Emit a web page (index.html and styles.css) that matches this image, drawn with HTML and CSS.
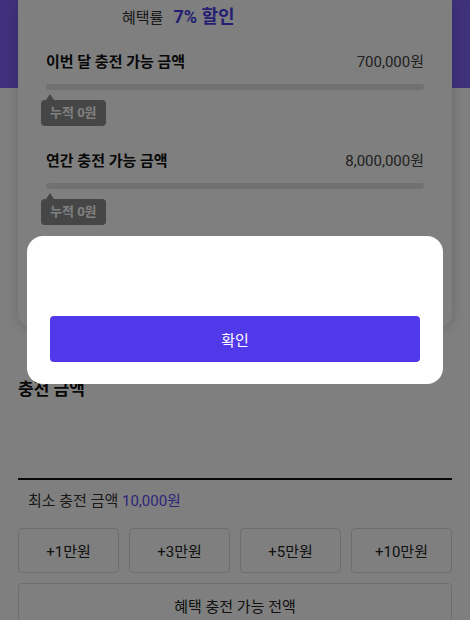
FILE: index.html
```html
<!DOCTYPE html>
<html lang="ko">
<head>
    <meta charset="UTF-8">
    <meta name="viewport" content="width=device-width, initial-scale=1.0">
    <title>충전하기</title>
    <link rel="stylesheet" href="styles.css">
</head>
<body>
    <!-- Top: purple band + limit card -->
    <div class="top">
        <div class="card">
            <div class="rate">
                <span class="rate-label">혜택률</span>
                <span class="rate-value">7% 할인</span>
            </div>

            <div class="limit">
                <div class="limit-head">
                    <span class="limit-title">이번 달 충전 가능 금액</span>
                    <span class="limit-amount">700,000원</span>
                </div>
                <div class="bar"><div class="bar-fill" style="width: 0%"></div></div>
                <div class="tip">누적 0원</div>
            </div>

            <div class="limit">
                <div class="limit-head">
                    <span class="limit-title">연간 충전 가능 금액</span>
                    <span class="limit-amount">8,000,000원</span>
                </div>
                <div class="bar"><div class="bar-fill" style="width: 0%"></div></div>
                <div class="tip">누적 0원</div>
            </div>
        </div>
    </div>

    <!-- Charge amount -->
    <div class="charge">
        <h2>충전 금액</h2>
        <div class="amount-input"></div>
        <p class="min">최소 충전 금액 <span class="accent">10,000원</span></p>
        <div class="quick">
            <button class="chip">+1만원</button>
            <button class="chip">+3만원</button>
            <button class="chip">+5만원</button>
            <button class="chip">+10만원</button>
        </div>
        <button class="chip full">혜택 충전 가능 전액</button>
    </div>

    <!-- Modal -->
    <div class="overlay">
        <div class="modal">
            <div class="modal-body"></div>
            <button class="confirm">확인</button>
        </div>
    </div>
</body>
</html>
```

FILE: styles.css
```css
/* Global */
body, html {
    margin: 0;
    padding: 0;
    font-family: Roboto, "Noto Sans CJK KR", sans-serif;
    background: #fff;
    color: #222;
    overflow: hidden;
}

/* Top */
.top {
    background: linear-gradient(#8062fa 0, #8062fa 88px, transparent 88px);
    padding: 0 18px;
}

.card {
    background: #fff;
    border-radius: 0 0 14px 14px;
    box-shadow: 0 2px 14px rgba(0, 0, 0, 0.18);
    padding: 0 28px 102px;
}

.rate {
    display: flex;
    align-items: baseline;
    gap: 10px;
    padding: 2px 0 0 76px;
    height: 30px;
}

.rate-label {
    font-size: 15px;
    color: #333;
}

.rate-value {
    font-size: 18px;
    font-weight: bold;
    color: #4b3ee6;
}

.limit {
    padding-top: 16px;
}

.limit + .limit {
    padding-top: 21px;
}

.limit-head {
    display: flex;
    justify-content: space-between;
    align-items: center;
    height: 24px;
}

.limit-title {
    font-size: 15px;
    font-weight: bold;
    color: #111;
}

.limit-amount {
    font-size: 15px;
    color: #444;
}

.bar {
    margin-top: 12px;
    height: 6px;
    background: #e2e2e2;
    border-radius: 3px;
}

.bar-fill {
    height: 100%;
    background: #5a4cf2;
}

.tip {
    position: relative;
    display: inline-block;
    margin: 10px 0 0 -5px;
    padding: 0 9px;
    height: 26px;
    line-height: 26px;
    font-size: 13px;
    font-weight: bold;
    color: #fff;
    background: #8c8c8c;
    border-radius: 4px;
}

.tip::before {
    content: "";
    position: absolute;
    left: 5px;
    top: -6px;
    border-left: 4px solid transparent;
    border-right: 4px solid transparent;
    border-bottom: 6px solid #8c8c8c;
}

/* Charge */
.charge {
    padding: 0 18px;
}

.charge h2 {
    margin: 50px 0 0;
    font-size: 17px;
    font-weight: bold;
    color: #111;
    line-height: 24px;
}

.amount-input {
    height: 77px;
    border-bottom: 2px solid #111;
}

.min {
    margin: 10px 0 0 10px;
    font-size: 15px;
    line-height: 22px;
    color: #333;
}

.accent {
    color: #5a4cf2;
}

.quick {
    display: grid;
    grid-template-columns: repeat(4, 1fr);
    gap: 10px;
    margin-top: 16px;
}

.chip {
    height: 45px;
    background: #fff;
    border: 1px solid #ddd;
    border-radius: 4px;
    font-family: inherit;
    font-size: 15px;
    color: #222;
}

.chip.full {
    display: block;
    width: 100%;
    margin-top: 10px;
}

/* Modal */
.overlay {
    position: fixed;
    inset: 0;
    background: rgba(0, 0, 0, 0.5);
    display: flex;
    align-items: center;
    justify-content: center;
}

.modal {
    width: 416px;
    box-sizing: border-box;
    background: #fff;
    border-radius: 16px;
    padding: 0 23px 22px;
}

.modal-body {
    height: 80px;
}

.confirm {
    display: block;
    width: 100%;
    height: 46px;
    background: #5138e8;
    color: #fff;
    border: 0;
    border-radius: 4px;
    font-family: inherit;
    font-size: 15px;
    font-weight: normal;
}
```
